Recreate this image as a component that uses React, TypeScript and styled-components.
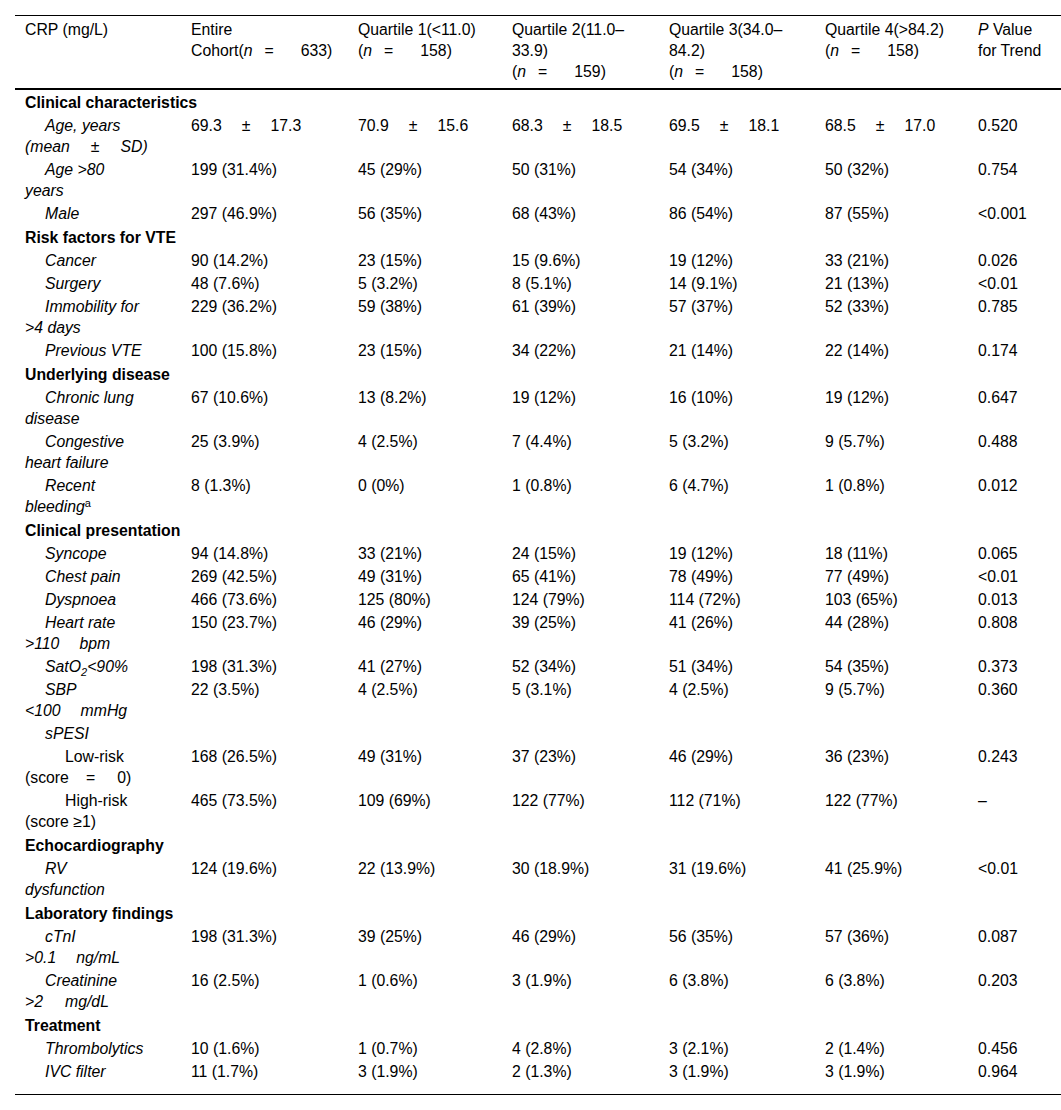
import React from 'react'
import styled, { createGlobalStyle } from 'styled-components'

const GlobalStyle = createGlobalStyle`
  html, body {
    margin: 0;
    padding: 0;
    background: #fff;
  }
  body {
    font-family: "Liberation Sans", Arial, sans-serif;
    font-size: 15.8px;
    color: #000;
    overflow-x: hidden;
  }
`

const Page = styled.div`
  padding: 15px 0 0 15px;
`

const Table = styled.table`
  width: 1046px;
  table-layout: fixed;
  border-collapse: collapse;
  border-top: 1px solid #000;
  border-bottom: 1px solid #000;
  font-family: "Liberation Sans", Arial, sans-serif;
  font-size: 15.8px;
  color: #000;
  line-height: 21px;
`

const HeadCell = styled.th`
  text-align: left;
  vertical-align: top;
  font-weight: normal;
  padding: 3px 10px 6px;
  border-bottom: 2px solid #000;
`

const SectionCell = styled.td`
  font-weight: bold;
  padding: 2px 10px 1px;
`

const LabelCell = styled.td<{ $indent?: number; $plain?: boolean; $last?: boolean }>`
  vertical-align: top;
  padding: 1px 10px ${(p) => (p.$last ? '12px' : '1px')};
  text-indent: ${(p) => (p.$indent ?? 1) * 20}px;
  font-style: ${(p) => (p.$plain ? 'normal' : 'italic')};
  white-space: nowrap;
`

const ValueCell = styled.td<{ $last?: boolean }>`
  vertical-align: top;
  padding: 1px 10px ${(p) => (p.$last ? '12px' : '1px')};
  white-space: nowrap;
`

const Sp = styled.span<{ $w?: number }>`
  display: inline-block;
  width: ${(p) => p.$w ?? 20}px;
  text-indent: 0;
`

const Sup = styled.sup`
  font-size: 11px;
  font-style: normal;
  line-height: 0;
  vertical-align: 5px;
`

const Sub = styled.sub`
  font-size: 11px;
  line-height: 0;
  vertical-align: -4px;
`

const widths = [166, 167, 154, 157, 156, 153, 93]

const N = ({ v }: { v: string }) => (
  <>
    (<i>n</i>
    <Sp $w={12} />=<Sp $w={27} />
    {v})
  </>
)

const pm = (a: string, b: string) => (
  <>
    {a}
    <Sp />±<Sp />
    {b}
  </>
)

type Row =
  | { section: string }
  | {
      label: React.ReactNode
      values: React.ReactNode[]
      indent?: number
      plain?: boolean
    }

const rows: Row[] = [
  { section: 'Clinical characteristics' },
  {
    label: (
      <>
        Age, years
        <br />
        (mean<Sp $w={21} />±<Sp $w={21} />SD)
      </>
    ),
    values: [pm('69.3', '17.3'), pm('70.9', '15.6'), pm('68.3', '18.5'), pm('69.5', '18.1'), pm('68.5', '17.0'), '0.520'],
  },
  {
    label: (
      <>
        Age &gt;80
        <br />
        years
      </>
    ),
    values: ['199 (31.4%)', '45 (29%)', '50 (31%)', '54 (34%)', '50 (32%)', '0.754'],
  },
  { label: 'Male', values: ['297 (46.9%)', '56 (35%)', '68 (43%)', '86 (54%)', '87 (55%)', '<0.001'] },
  { section: 'Risk factors for VTE' },
  { label: 'Cancer', values: ['90 (14.2%)', '23 (15%)', '15 (9.6%)', '19 (12%)', '33 (21%)', '0.026'] },
  { label: 'Surgery', values: ['48 (7.6%)', '5 (3.2%)', '8 (5.1%)', '14 (9.1%)', '21 (13%)', '<0.01'] },
  {
    label: (
      <>
        Immobility for
        <br />
        &gt;4 days
      </>
    ),
    values: ['229 (36.2%)', '59 (38%)', '61 (39%)', '57 (37%)', '52 (33%)', '0.785'],
  },
  { label: 'Previous VTE', values: ['100 (15.8%)', '23 (15%)', '34 (22%)', '21 (14%)', '22 (14%)', '0.174'] },
  { section: 'Underlying disease' },
  {
    label: (
      <>
        Chronic lung
        <br />
        disease
      </>
    ),
    values: ['67 (10.6%)', '13 (8.2%)', '19 (12%)', '16 (10%)', '19 (12%)', '0.647'],
  },
  {
    label: (
      <>
        Congestive
        <br />
        heart failure
      </>
    ),
    values: ['25 (3.9%)', '4 (2.5%)', '7 (4.4%)', '5 (3.2%)', '9 (5.7%)', '0.488'],
  },
  {
    label: (
      <>
        Recent
        <br />
        bleeding<Sup>a</Sup>
      </>
    ),
    values: ['8 (1.3%)', '0 (0%)', '1 (0.8%)', '6 (4.7%)', '1 (0.8%)', '0.012'],
  },
  { section: 'Clinical presentation' },
  { label: 'Syncope', values: ['94 (14.8%)', '33 (21%)', '24 (15%)', '19 (12%)', '18 (11%)', '0.065'] },
  { label: 'Chest pain', values: ['269 (42.5%)', '49 (31%)', '65 (41%)', '78 (49%)', '77 (49%)', '<0.01'] },
  { label: 'Dyspnoea', values: ['466 (73.6%)', '125 (80%)', '124 (79%)', '114 (72%)', '103 (65%)', '0.013'] },
  {
    label: (
      <>
        Heart rate
        <br />
        &gt;110<Sp />bpm
      </>
    ),
    values: ['150 (23.7%)', '46 (29%)', '39 (25%)', '41 (26%)', '44 (28%)', '0.808'],
  },
  {
    label: (
      <>
        SatO<Sub>2</Sub>&lt;90%
      </>
    ),
    values: ['198 (31.3%)', '41 (27%)', '52 (34%)', '51 (34%)', '54 (35%)', '0.373'],
  },
  {
    label: (
      <>
        SBP
        <br />
        &lt;100<Sp />mmHg
      </>
    ),
    values: ['22 (3.5%)', '4 (2.5%)', '5 (3.1%)', '4 (2.5%)', '9 (5.7%)', '0.360'],
  },
  { label: 'sPESI', values: ['', '', '', '', '', ''] },
  {
    label: (
      <>
        Low-risk
        <br />
        (score<Sp $w={17} />=<Sp $w={22} />0)
      </>
    ),
    indent: 2,
    plain: true,
    values: ['168 (26.5%)', '49 (31%)', '37 (23%)', '46 (29%)', '36 (23%)', '0.243'],
  },
  {
    label: (
      <>
        High-risk
        <br />
        (score ≥1)
      </>
    ),
    indent: 2,
    plain: true,
    values: ['465 (73.5%)', '109 (69%)', '122 (77%)', '112 (71%)', '122 (77%)', '–'],
  },
  { section: 'Echocardiography' },
  {
    label: (
      <>
        RV
        <br />
        dysfunction
      </>
    ),
    values: ['124 (19.6%)', '22 (13.9%)', '30 (18.9%)', '31 (19.6%)', '41 (25.9%)', '<0.01'],
  },
  { section: 'Laboratory findings' },
  {
    label: (
      <>
        cTnI
        <br />
        &gt;0.1<Sp />ng/mL
      </>
    ),
    values: ['198 (31.3%)', '39 (25%)', '46 (29%)', '56 (35%)', '57 (36%)', '0.087'],
  },
  {
    label: (
      <>
        Creatinine
        <br />
        &gt;2<Sp $w={22} />mg/dL
      </>
    ),
    values: ['16 (2.5%)', '1 (0.6%)', '3 (1.9%)', '6 (3.8%)', '6 (3.8%)', '0.203'],
  },
  { section: 'Treatment' },
  { label: 'Thrombolytics', values: ['10 (1.6%)', '1 (0.7%)', '4 (2.8%)', '3 (2.1%)', '2 (1.4%)', '0.456'] },
  { label: 'IVC filter', values: ['11 (1.7%)', '3 (1.9%)', '2 (1.3%)', '3 (1.9%)', '3 (1.9%)', '0.964'] },
]

export default function App() {
  return (
    <Page>
      <GlobalStyle />
      <Table>
        <colgroup>
          {widths.map((w, i) => (
            <col key={i} style={{ width: w }} />
          ))}
        </colgroup>
        <thead>
          <tr>
            <HeadCell>CRP (mg/L)</HeadCell>
            <HeadCell>
              Entire
              <br />
              Cohort<N v="633" />
            </HeadCell>
            <HeadCell>
              Quartile 1(&lt;11.0)
              <br />
              <N v="158" />
            </HeadCell>
            <HeadCell>
              Quartile 2(11.0–
              <br />
              33.9)
              <br />
              <N v="159" />
            </HeadCell>
            <HeadCell>
              Quartile 3(34.0–
              <br />
              84.2)
              <br />
              <N v="158" />
            </HeadCell>
            <HeadCell>
              Quartile 4(&gt;84.2)
              <br />
              <N v="158" />
            </HeadCell>
            <HeadCell>
              <i>P</i> Value
              <br />
              for Trend
            </HeadCell>
          </tr>
        </thead>
        <tbody>
          {rows.map((row, i) => {
            if ('section' in row) {
              return (
                <tr key={i}>
                  <SectionCell colSpan={7}>{row.section}</SectionCell>
                </tr>
              )
            }
            const last = i === rows.length - 1
            return (
              <tr key={i}>
                <LabelCell $indent={row.indent} $plain={row.plain} $last={last}>
                  {row.label}
                </LabelCell>
                {row.values.map((v, j) => (
                  <ValueCell key={j} $last={last}>
                    {v}
                  </ValueCell>
                ))}
              </tr>
            )
          })}
        </tbody>
      </Table>
    </Page>
  )
}
